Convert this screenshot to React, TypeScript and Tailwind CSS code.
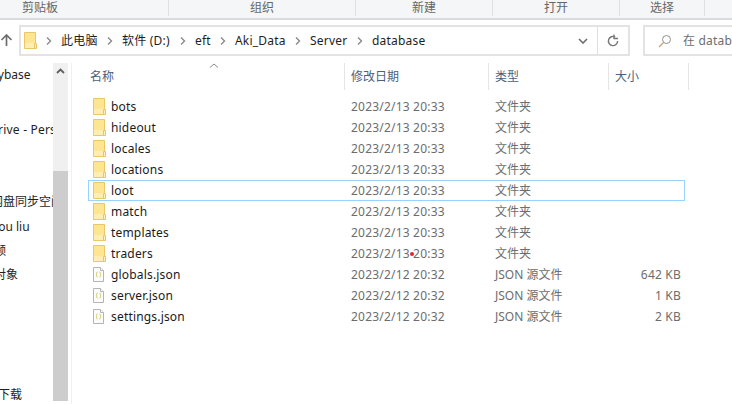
const font = { fontFamily: '"Noto Sans", "Noto Sans CJK SC", sans-serif' };

const FILES = [
  { name: 'bots', date: '2023/2/13 20:33', type: '文件夹', size: '', kind: 'folder' },
  { name: 'hideout', date: '2023/2/13 20:33', type: '文件夹', size: '', kind: 'folder' },
  { name: 'locales', date: '2023/2/13 20:33', type: '文件夹', size: '', kind: 'folder' },
  { name: 'locations', date: '2023/2/13 20:33', type: '文件夹', size: '', kind: 'folder' },
  { name: 'loot', date: '2023/2/13 20:33', type: '文件夹', size: '', kind: 'folder' },
  { name: 'match', date: '2023/2/13 20:33', type: '文件夹', size: '', kind: 'folder' },
  { name: 'templates', date: '2023/2/13 20:33', type: '文件夹', size: '', kind: 'folder' },
  { name: 'traders', date: '2023/2/13 20:33', type: '文件夹', size: '', kind: 'folder' },
  { name: 'globals.json', date: '2023/2/12 20:32', type: 'JSON 源文件', size: '642 KB', kind: 'json' },
  { name: 'server.json', date: '2023/2/12 20:32', type: 'JSON 源文件', size: '1 KB', kind: 'json' },
  { name: 'settings.json', date: '2023/2/12 20:32', type: 'JSON 源文件', size: '2 KB', kind: 'json' },
];

function FolderIcon() {
  return (
    <svg width="13" height="17" viewBox="0 0 13 17" className="shrink-0">
      <path d="M0.5 0.5H11.5V16.5H0.5Z" fill="#fde592" stroke="#ecc768" />
      <path d="M1 11H11V16H1Z" fill="#ffeeb4" />
      <path d="M10.5 11.5H12.5V16.5H10.5Z" fill="#fff3c4" stroke="#e8c468" />
    </svg>
  );
}

function JsonIcon() {
  return (
    <svg width="11" height="15" viewBox="0 0 11 15" className="shrink-0">
      <path d="M0.5 0.5H7.5L10.5 3.5V14.5H0.5Z" fill="#fbfbfb" stroke="#b4b4b4" />
      <path d="M7.5 0.5V3.5H10.5" fill="#fff" stroke="#b4b4b4" />
      <path d="M4.5 5C3.5 5 3.5 6 3.5 7.5S3.5 10 4.5 10M6.5 5C7.5 5 7.5 6 7.5 7.5S7.5 10 6.5 10" fill="none" stroke="#cfc964" />
    </svg>
  );
}

function Chevron() {
  return (
    <svg width="6" height="8" viewBox="0 0 6 8" className="shrink-0">
      <path d="M1 0.5L4.5 4L1 7.5" fill="none" stroke="#8a8a8a" strokeWidth="1.4" />
    </svg>
  );
}

const CRUMBS = [
  { label: '此电脑', pad: 'w-[55px]' },
  { label: '软件 (D:)', pad: 'w-[67px]' },
  { label: 'eft', pad: 'w-[34px]' },
  { label: 'Aki_Data', pad: 'w-[69px]' },
  { label: 'Server', pad: 'w-[56px]' },
  { label: 'database', pad: 'w-[70px]' },
];

const RIBBON = [
  { label: '剪贴板', w: 'w-[169px] pr-[88px]' },
  { label: '组织', w: 'w-[187px]' },
  { label: '新建', w: 'w-[137px]' },
  { label: '打开', w: 'w-[127px]' },
  { label: '选择', w: 'w-[85px]' },
];

export default function App() {
  return (
    <div className="w-[732px] h-[404px] bg-white overflow-hidden text-[12px] text-[#1e1e1e] flex flex-col" style={font}>
      <div className="h-[20px] shrink-0 flex bg-[#f5f6f7] border-b-2 border-[#dadbdc] text-[#666666]">
        {RIBBON.map(g => (
          <div key={g.label} className={`${g.w} h-[16px] border-r border-[#dfe0e1] flex items-center justify-center`}>
            {g.label}
          </div>
        ))}
      </div>

      <div className="h-[36px] shrink-0 flex items-start pt-[5px]">
        <svg width="14" height="14" viewBox="0 0 14 14" className="mt-[8px] mr-[5px] shrink-0">
          <path d="M6.5 13V2M1.5 7L6.5 2L11.5 7" fill="none" stroke="#6e6e6e" strokeWidth="1.7" />
        </svg>
        <div className="w-[611px] h-[31px] border-2 border-[#e3e3e3] flex items-center shrink-0">
          <div className="w-[12px] h-[17px] ml-[3px] mr-[10px] shrink-0 flex"><FolderIcon /></div>
          {CRUMBS.map(c => (
            <div key={c.label} className="flex items-center shrink-0">
              <Chevron />
              <span className={`${c.pad} pl-[9px] whitespace-nowrap tracking-[0.2px]`}>{c.label}</span>
            </div>
          ))}
          <div className="flex-1" />
          <svg width="10" height="6" viewBox="0 0 10 6" className="mr-[9px] shrink-0">
            <path d="M1 1L5 5L9 1" fill="none" stroke="#6d6d6d" strokeWidth="1.6" />
          </svg>
          <div className="w-[31px] h-full border-l border-[#e0e0e0] flex items-center justify-center shrink-0">
            <svg width="12" height="13" viewBox="0 0 12 13">
              <path d="M8.2 3A4.6 4.6 0 1 0 10.6 7" fill="none" stroke="#757575" strokeWidth="1.4" />
              <path d="M7 0.5V4.5H11" fill="none" stroke="#757575" strokeWidth="1.3" />
            </svg>
          </div>
        </div>
        <div className="ml-[13px] flex-1 h-[31px] border-2 border-r-0 border-[#e3e3e3] flex items-center overflow-hidden">
          <svg width="14" height="14" viewBox="0 0 14 14" className="ml-[13px] mr-[11px] shrink-0">
            <circle cx="8.5" cy="5.5" r="4" fill="none" stroke="#8f8f8f" />
            <path d="M5.5 8.5L1 13" stroke="#c9a27a" strokeWidth="1.3" />
          </svg>
          <span className="text-[#6d6d6d] whitespace-nowrap tracking-[0.2px]">在 database 中搜索</span>
        </div>
      </div>

      <div className="flex-1 flex min-h-0 mt-[7px]">
        <div className="w-[53px] shrink-0 overflow-hidden whitespace-nowrap flex flex-col items-start">
          <div className="ml-[-23px] mt-[3px] h-[18px] leading-[18px]">Weiybase</div>
          <div className="ml-[-35px] mt-[37px] h-[18px] leading-[18px] tracking-[0.2px]">OneDrive - Personal</div>
          <div className="ml-[-9px] mt-[54px] h-[18px] leading-[18px]">网盘同步空间</div>
          <div className="ml-[-8px] mt-[7px] h-[18px] leading-[18px]">You liu</div>
          <div className="ml-[-18px] mt-[6px] h-[18px] leading-[18px]">视频</div>
          <div className="ml-[-6px] mt-[6px] h-[18px] leading-[18px]">对象</div>
          <div className="ml-[-2px] mt-[102px] h-[18px] leading-[18px]">下载</div>
        </div>

        <div className="w-[15px] shrink-0 h-[338px] bg-[#f0f0f0] flex flex-col">
          <div className="h-[108px] shrink-0 flex justify-center pt-[5px]">
            <svg width="9" height="6" viewBox="0 0 9 6">
              <path d="M1 5L4.5 1.5L8 5" fill="none" stroke="#606060" strokeWidth="1.8" />
            </svg>
          </div>
          <div className="flex-1 bg-[#cdcdcd]" />
        </div>
        <div className="w-[4px] shrink-0 border-r border-[#f0f0f0]" />

        <div className="flex-1 min-w-0 relative">
          <svg width="10" height="5" viewBox="0 0 10 5" className="absolute left-[137px] top-[0px]">
            <path d="M1 4.5L5 1L9 4.5" fill="none" stroke="#8a8a8a" />
          </svg>
          <div className="flex h-[27px] text-[#4c607a]">
            <div className="w-[273px] pl-[18px] border-r border-[#e5e5e5] flex items-center">名称</div>
            <div className="w-[144px] pl-[6px] border-r border-[#e5e5e5] flex items-center">修改日期</div>
            <div className="w-[120px] pl-[6px] border-r border-[#e5e5e5] flex items-center">类型</div>
            <div className="w-[80px] pl-[6px] border-r border-[#e5e5e5] flex items-center">大小</div>
          </div>
          <div className="mt-[6px] ml-[16px] w-[597px] flex flex-col">
            {FILES.map(f => (
              <div
                key={f.name}
                className={f.name === 'loot'
                  ? 'h-[21px] flex items-center border border-[#99d1ff]'
                  : 'h-[21px] flex items-center border border-transparent'}
              >
                <div className="w-[256px] shrink-0 flex items-center pl-[4px] text-[#1a1a1a]">
                  <span className="w-[18px] shrink-0 flex">{f.kind === 'folder' ? <FolderIcon /> : <JsonIcon />}</span>
                  <span className="whitespace-nowrap tracking-[0.18px]">{f.name}</span>
                </div>
                <div className="w-[144px] shrink-0 pl-[6px] text-[#6d6d6d] whitespace-nowrap relative tracking-[0.2px]">
                  {f.date}
                  {f.name === 'traders' && <span className="absolute left-[65px] top-[7px] w-[4px] h-[4px] rounded-full bg-[#e8242c]" />}
                </div>
                <div className="w-[120px] shrink-0 pl-[6px] text-[#6d6d6d] whitespace-nowrap">{f.type}</div>
                <div className="w-[72px] shrink-0 text-right text-[#6d6d6d] whitespace-nowrap tracking-[0.2px]">{f.size}</div>
              </div>
            ))}
          </div>
        </div>
      </div>
    </div>
  );
}
